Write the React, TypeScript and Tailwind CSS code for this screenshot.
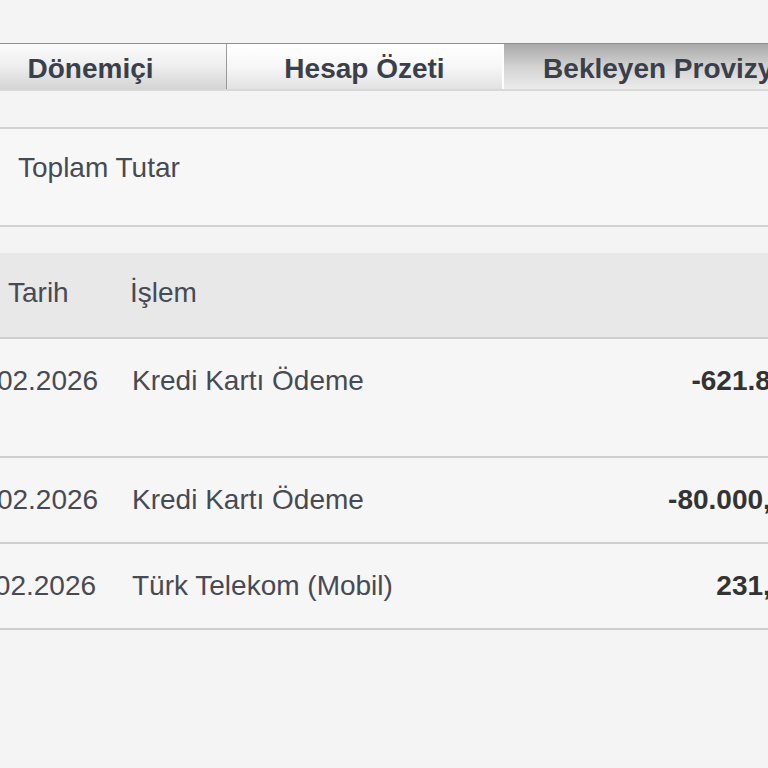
const rows = [
  { date: '13.02.2026', desc: 'Kredi Kartı Ödeme', amount: '-621.800', height: 'h-[119px]', pad: 'pt-[26px]' },
  { date: '12.02.2026', desc: 'Kredi Kartı Ödeme', amount: '-80.000,00', height: 'h-[86px]', pad: 'pt-[26px]' },
  { date: '11.02.2026', desc: 'Türk Telekom (Mobil)', amount: '231,00', height: 'h-[86px]', pad: 'pt-[26px]' },
];

const tabs = [
  { label: 'Dönemiçi', className: 'w-[272px] -ml-[45px] bg-gradient-to-b from-[#fbfbfb] via-[#eeeeee] to-[#d4d4d4] border-r border-[#9a9a9a]' },
  { label: 'Hesap Özeti', className: 'w-[277px] bg-gradient-to-b from-[#ffffff] via-[#f7f7f7] to-[#e2e2e2] border-r-2 border-[#fdfdfd]' },
  { label: 'Bekleyen Provizyonlar', className: 'w-[377px] bg-gradient-to-b from-[#a9a9a9] via-[#d2d2d2] to-[#ececec]' },
];

function Tabs() {
  return (
    <div className="flex h-[48px] border-t border-[#8f8f8f] border-b-2 border-b-[#d8d8d8] shrink-0">
      {tabs.map((t) => (
        <div
          key={t.label}
          className={`${t.className} shrink-0 flex items-center justify-center pt-[4px] text-[28px] font-bold text-[#3a3f4a] leading-[32px] whitespace-nowrap`}
        >
          {t.label}
        </div>
      ))}
    </div>
  );
}

function TxTable() {
  return (
    <div className="w-[980px] -ml-[48px] shrink-0">
      <div className="grid grid-cols-[178px_480px_192px_130px] h-[86px] bg-[#e8e8e8] border-b-2 border-[#cfcfcf]">
        <div className="pl-[56px] pt-[24px] leading-[32px]">Tarih</div>
        <div className="pt-[24px] leading-[32px]">İşlem</div>
        <div />
        <div />
      </div>
      {rows.map((r, i) => (
        <div
          key={i}
          className={`grid grid-cols-[178px_480px_192px_130px] ${r.height} bg-[#f6f6f6] border-b-2 border-[#cfcfcf]`}
        >
          <div className={`pl-[6px] ${r.pad} leading-[32px] whitespace-nowrap`}>{r.date}</div>
          <div className={`pl-[2px] ${r.pad} leading-[32px] whitespace-nowrap`}>{r.desc}</div>
          <div className={`${r.pad} leading-[32px] text-right font-bold text-[#333] whitespace-nowrap`}>{r.amount}</div>
          <div />
        </div>
      ))}
    </div>
  );
}

export default function App() {
  return (
    <div
      className="w-[768px] h-[768px] overflow-hidden bg-[#f4f4f4] text-[28px] text-[#474a53] flex flex-col"
      style={{ fontFamily: '"Liberation Sans", Arial, sans-serif' }}
    >
      <div className="h-[43px] shrink-0" />
      <Tabs />
      <div className="h-[36px] shrink-0" />
      <div className="h-[100px] shrink-0 border-t-2 border-b-2 border-[#d2d2d2] bg-[#f7f7f7] pl-[18px] pt-[23px] leading-[32px]">
        Toplam Tutar
      </div>
      <div className="h-[26px] shrink-0" />
      <TxTable />
    </div>
  );
}
